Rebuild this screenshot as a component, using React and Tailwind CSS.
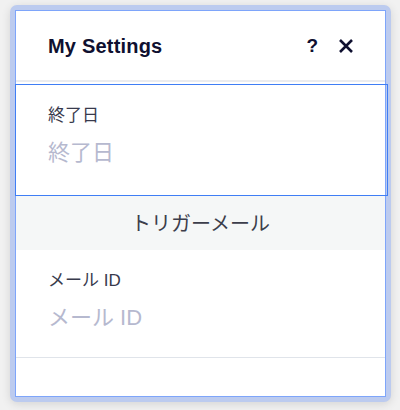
import React from 'react';

const font = { fontFamily: '"Liberation Sans","Noto Sans CJK JP",sans-serif' };

const CloseIcon = () => (
    <svg width="16" height="16" viewBox="0 0 16 16" fill="none">
        <path d="M2 2L14 14M14 2L2 14" stroke="#0f1030" strokeWidth="2.6" strokeLinecap="butt" />
    </svg>
);

const Field = ({ label, placeholder }) => (
    <div className="pl-[32px]">
        <div className="text-[17px] leading-[20px] text-[#383a4c]">{label}</div>
        <input
            className="mt-[13px] block w-[300px] text-[22px] leading-[28px] text-[#383a4c] placeholder:text-[#b6b9cf] outline-none bg-transparent"
            placeholder={placeholder}
            style={font}
        />
    </div>
);

export default function App() {
    return (
        <div className="h-[410px] w-[400px] bg-[#f1f1f1] pt-[5px] pl-[10px]" style={font}>
            <div className="w-[381px] h-[397px] rounded-[7px] bg-[#bccbef] p-[5px] shadow-[0_2px_10px_rgba(0,0,0,0.12)]">
                <div className="h-full border border-[#7ea5fa] bg-white flex flex-col">
                    <div className="h-[71px] shrink-0 flex items-center justify-between pl-[32px] pr-[31px] border-b-2 border-[#ebecef]">
                        <h2 className="text-[20px] font-bold text-[#0f1030] tracking-[0.2px]">My Settings</h2>
                        <div className="flex items-center gap-[20px]">
                            <span className="text-[19px] font-bold text-[#0f1030] leading-none">?</span>
                            <CloseIcon />
                        </div>
                    </div>
                    <div className="mt-[2px] -ml-px -mr-[3px] h-[112px] shrink-0 border border-[#3f7ef5] pt-[21px]">
                        <Field label="終了日" placeholder="終了日" />
                    </div>
                    <div className="h-[54px] shrink-0 bg-[#f5f7f7] flex items-center justify-center pt-[2px] text-[20px] text-[#3c3e4b]">
                        トリガーメール
                    </div>
                    <div className="h-[108px] shrink-0 pt-[21px] border-b border-[#e0e4ea]">
                        <Field label="メール ID" placeholder="メール ID" />
                    </div>
                    <div className="flex-1" />
                </div>
            </div>
        </div>
    );
}
